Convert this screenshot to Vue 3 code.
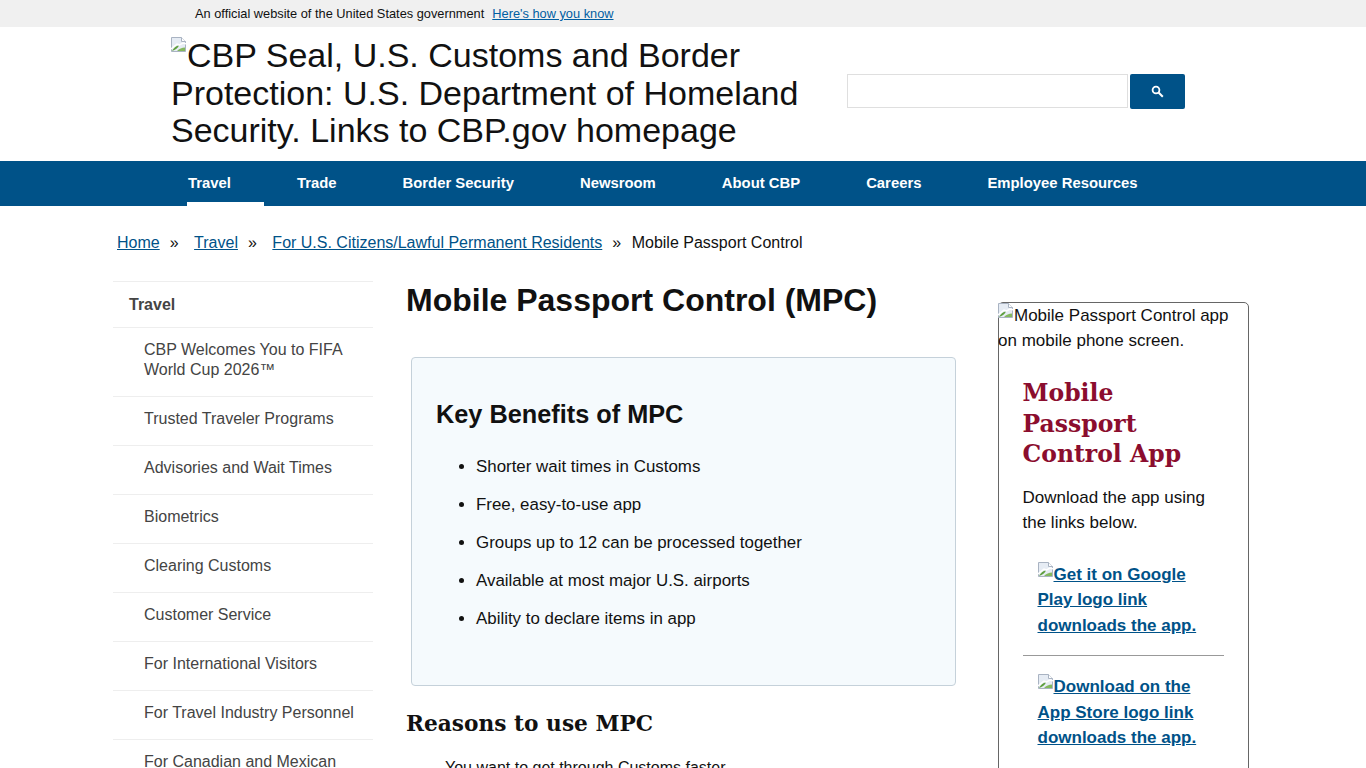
<script setup>
const navItems = ['Travel', 'Trade', 'Border Security', 'Newsroom', 'About CBP', 'Careers', 'Employee Resources']
const sideItems = [
  'CBP Welcomes You to FIFA World Cup 2026™',
  'Trusted Traveler Programs',
  'Advisories and Wait Times',
  'Biometrics',
  'Clearing Customs',
  'Customer Service',
  'For International Visitors',
  'For Travel Industry Personnel',
  'For Canadian and Mexican Citizens'
]
const benefits = [
  'Shorter wait times in Customs',
  'Free, easy-to-use app',
  'Groups up to 12 can be processed together',
  'Available at most major U.S. airports',
  'Ability to declare items in app'
]
</script>

<template>
  <div class="page">
    <div class="banner">
      <span>An official website of the United States government</span>
      <a href="#">Here's how you know</a>
    </div>

    <header class="header">
      <a class="logo" href="#">
        <svg class="broken big" viewBox="0 0 16 16"><path d="M.500.500h10l4 4v10H.500z" fill="#e6ecf4" stroke="#a9b3c2"/><path d="M10.500.500v4h4" fill="#fff" stroke="#a9b3c2"/><path d="M1 14c1.500-3 4-5.500 7-5.500-1 2.500-3.500 4.500-7 5.500z" fill="#5f9f3e"/><path d="M6 14c2-2 5-3.500 8-3.500V14z" fill="#84b85e"/><path d="M0 12 6 7l2.500 1L12 6l4 1" fill="none" stroke="#fff" stroke-width="1.500"/></svg>CBP Seal, U.S. Customs and Border Protection: U.S. Department of Homeland Security. Links to CBP.gov homepage
      </a>
      <form class="search" @submit.prevent>
        <input class="search-input" type="text" aria-label="Search" />
        <button class="search-btn" aria-label="Search">
          <svg viewBox="0 0 13 13" width="13" height="13"><circle cx="5" cy="5" r="3.400" fill="none" stroke="#fff" stroke-width="1.800"/><path d="M7.500 7.500 11.800 11.800" stroke="#fff" stroke-width="2"/></svg>
        </button>
      </form>
    </header>

    <nav class="nav">
      <a v-for="(item, i) in navItems" :key="item" href="#" class="nav-item" :class="{ active: i === 0 }">{{ item }}</a>
    </nav>

    <div class="crumbs">
      <a href="#">Home</a><span class="sep">»</span>
      <a href="#">Travel</a><span class="sep">»</span>
      <a href="#">For U.S. Citizens/Lawful Permanent Residents</a><span class="sep last">»</span>
      <span>Mobile Passport Control</span>
    </div>

    <div class="layout">
      <aside class="side">
        <a class="side-title" href="#">Travel</a>
        <a v-for="item in sideItems" :key="item" class="side-item" href="#">{{ item }}</a>
      </aside>

      <main class="main">
        <h1>Mobile Passport Control (MPC)</h1>
        <section class="box">
          <h2>Key Benefits of MPC</h2>
          <ul>
            <li v-for="b in benefits" :key="b">{{ b }}</li>
          </ul>
        </section>
        <h3>Reasons to use MPC</h3>
        <ul class="reasons">
          <li>You want to get through Customs faster</li>
        </ul>
      </main>

      <aside class="card">
        <p class="card-alt"><svg class="broken" viewBox="0 0 16 16"><path d="M.500.500h10l4 4v10H.500z" fill="#e6ecf4" stroke="#a9b3c2"/><path d="M10.500.500v4h4" fill="#fff" stroke="#a9b3c2"/><path d="M1 14c1.500-3 4-5.500 7-5.500-1 2.500-3.500 4.500-7 5.500z" fill="#5f9f3e"/><path d="M6 14c2-2 5-3.500 8-3.500V14z" fill="#84b85e"/><path d="M0 12 6 7l2.500 1L12 6l4 1" fill="none" stroke="#fff" stroke-width="1.500"/></svg>Mobile Passport Control app on mobile phone screen.</p>
        <div class="card-body">
          <h4>Mobile Passport Control App</h4>
          <p>Download the app using the links below.</p>
          <a class="store" href="#"><svg class="broken" viewBox="0 0 16 16"><path d="M.500.500h10l4 4v10H.500z" fill="#e6ecf4" stroke="#a9b3c2"/><path d="M10.500.500v4h4" fill="#fff" stroke="#a9b3c2"/><path d="M1 14c1.500-3 4-5.500 7-5.500-1 2.500-3.500 4.500-7 5.500z" fill="#5f9f3e"/><path d="M6 14c2-2 5-3.500 8-3.500V14z" fill="#84b85e"/><path d="M0 12 6 7l2.500 1L12 6l4 1" fill="none" stroke="#fff" stroke-width="1.500"/></svg>Get it on Google Play logo link downloads the app.</a>
          <hr />
          <a class="store second" href="#"><svg class="broken" viewBox="0 0 16 16"><path d="M.500.500h10l4 4v10H.500z" fill="#e6ecf4" stroke="#a9b3c2"/><path d="M10.500.500v4h4" fill="#fff" stroke="#a9b3c2"/><path d="M1 14c1.500-3 4-5.500 7-5.500-1 2.500-3.500 4.500-7 5.500z" fill="#5f9f3e"/><path d="M6 14c2-2 5-3.500 8-3.500V14z" fill="#84b85e"/><path d="M0 12 6 7l2.500 1L12 6l4 1" fill="none" stroke="#fff" stroke-width="1.500"/></svg>Download on the App Store logo link downloads the app.</a>
        </div>
      </aside>
    </div>
  </div>
</template>

<style>
html, body { margin: 0; overflow: hidden; background: #fff; }
</style>

<style scoped>
.page {
  height: 768px;
  overflow: hidden;
  font-family: "Liberation Sans", Arial, sans-serif;
  color: #111;
}
.banner {
  height: 27px;
  box-sizing: border-box;
  padding: 6px 0 0 195px;
  background: #f0f0f0;
  font-size: 12.800px;
  line-height: 15px;
}
.banner a { margin-left: 8px; color: #005ea2; }
.header {
  height: 134px;
  display: flex;
  align-items: flex-start;
  padding-left: 171px;
}
.logo {
  display: block;
  width: 640px;
  margin-top: 10px;
  font-size: 34px;
  line-height: 37.600px;
  color: #111;
  text-decoration: none;
}
.broken { width: 16px; height: 16px; vertical-align: 2px; }
.broken.big { vertical-align: 14px; }
.search { display: flex; gap: 2px; margin: 47px 0 0 36px; }
.search-input {
  width: 281px;
  height: 34px;
  box-sizing: border-box;
  border: 1px solid #dfdfdf;
  padding: 0;
  margin: 0;
  background: #fff;
}
.search-btn {
  width: 55px;
  height: 35px;
  border: 0;
  border-radius: 2px;
  padding: 0;
  background: #005288;
  display: flex;
  align-items: center;
  justify-content: center;
}
.nav {
  height: 45px;
  display: flex;
  padding-left: 187px;
  background: #005288;
}
.nav-item {
  box-sizing: border-box;
  height: 45px;
  padding: 13px 33px 0 1px;
  margin-right: 32px;
  color: #fff;
  font-size: 14.850px;
  font-weight: 700;
  line-height: 18px;
  text-decoration: none;
}
.nav-item.active { border-bottom: 4px solid #fff; }
.crumbs {
  padding: 28px 0 0 117px;
  height: 47px;
  font-size: 16px;
  line-height: 18px;
  color: #111;
}
.crumbs a { color: #005288; }
.sep { margin: 0 15.500px 0 10px; }
.sep.last { margin-right: 10.500px; }
.layout {
  display: flex;
  align-items: flex-start;
  padding-left: 113px;
}
.side { width: 260px; flex: none; border-top: 1px solid #eee; }
.side-title, .side-item {
  display: block;
  color: #444;
  text-decoration: none;
  font-size: 16px;
  line-height: 20px;
  border-bottom: 1px solid #eee;
}
.side-title { padding: 13px 16px 12px; font-weight: 700; }
.side-item { padding: 12px 16px 16px 31px; }
.main { width: 550px; flex: none; margin-left: 33px; }
h1 {
  margin: 0;
  font-size: 32px;
  line-height: 38px;
  font-weight: 700;
}
.box {
  box-sizing: border-box;
  width: 545px;
  height: 329px;
  margin: 38px 0 0 5px;
  padding: 41px 24px 0;
  background: #f5fafd;
  border: 1px solid #c5d1da;
  border-radius: 4px;
}
h2 { margin: 0; font-size: 25.300px; line-height: 30px; font-weight: 700; }
.box ul { margin: 28px 0 0; padding: 0 0 0 40px; }
.box li { font-size: 16.900px; line-height: 20px; margin-bottom: 18px; }
h3 {
  margin: 23px 0 0;
  font-family: "DejaVu Serif", Georgia, serif;
  font-size: 21.700px;
  line-height: 30px;
  font-weight: 700;
}
.reasons { margin: 19px 0 0; padding: 0 0 0 39px; list-style: none; font-size: 16px; line-height: 20px; }
.card {
  box-sizing: border-box;
  width: 251px;
  height: 600px;
  margin: 21px 0 0 42px;
  flex: none;
  border: 1px solid #666;
  border-radius: 5px;
  font-size: 17px;
  line-height: 25.500px;
}
.card-alt { margin: -0.400px 0 0 -1px; }
.card-body { padding: 24.500px 24px 0 23.500px; }
h4 {
  margin: 0;
  font-family: "DejaVu Serif", Georgia, serif;
  font-size: 23.500px;
  line-height: 30.500px;
  font-weight: 700;
  color: #8b0d2e;
}
.card-body p { margin: 15px 0 0; }
.store {
  display: block;
  margin: 26px 0 0 15px;
  font-weight: 700;
  color: #005288;
}
.store.second { margin-top: 18px; }
hr { margin: 17px 0 0; border: 0; border-top: 1px solid #999; }
</style>
